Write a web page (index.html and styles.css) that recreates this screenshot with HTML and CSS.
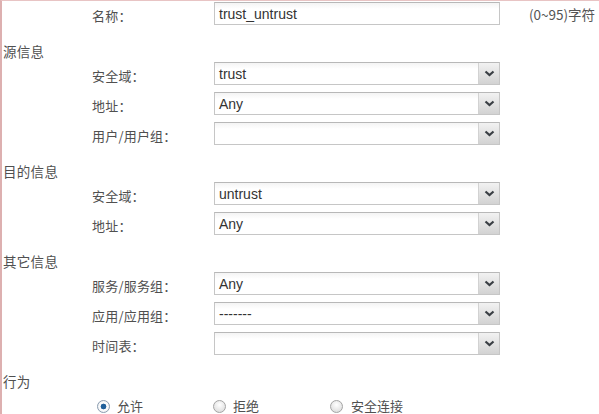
FILE: index.html
```html
<!DOCTYPE html>
<html lang="zh">
<head>
<meta charset="utf-8">
<link rel="stylesheet" href="styles.css">
</head>
<body>
<div class="page">
  <div class="field name-row">
    <span class="label">名称：</span>
    <div class="input">trust_untrust</div>
    <span class="note">(0~95)字符</span>
  </div>

  <div class="section">源信息</div>
  <div class="field">
    <span class="label">安全域：</span>
    <div class="select"><span class="val">trust</span><span class="arrow"><svg width="11" height="7" viewBox="0 0 11 7"><path d="M1.5 1.5 L5.5 5 L9.5 1.5" fill="none" stroke="#3a3f44" stroke-width="2.2"/></svg></span></div>
  </div>
  <div class="field">
    <span class="label">地址：</span>
    <div class="select"><span class="val">Any</span><span class="arrow"><svg width="11" height="7" viewBox="0 0 11 7"><path d="M1.5 1.5 L5.5 5 L9.5 1.5" fill="none" stroke="#3a3f44" stroke-width="2.2"/></svg></span></div>
  </div>
  <div class="field">
    <span class="label">用户/用户组：</span>
    <div class="select"><span class="val"></span><span class="arrow"><svg width="11" height="7" viewBox="0 0 11 7"><path d="M1.5 1.5 L5.5 5 L9.5 1.5" fill="none" stroke="#3a3f44" stroke-width="2.2"/></svg></span></div>
  </div>

  <div class="section">目的信息</div>
  <div class="field">
    <span class="label">安全域：</span>
    <div class="select"><span class="val">untrust</span><span class="arrow"><svg width="11" height="7" viewBox="0 0 11 7"><path d="M1.5 1.5 L5.5 5 L9.5 1.5" fill="none" stroke="#3a3f44" stroke-width="2.2"/></svg></span></div>
  </div>
  <div class="field">
    <span class="label">地址：</span>
    <div class="select"><span class="val">Any</span><span class="arrow"><svg width="11" height="7" viewBox="0 0 11 7"><path d="M1.5 1.5 L5.5 5 L9.5 1.5" fill="none" stroke="#3a3f44" stroke-width="2.2"/></svg></span></div>
  </div>

  <div class="section">其它信息</div>
  <div class="field">
    <span class="label">服务/服务组：</span>
    <div class="select"><span class="val">Any</span><span class="arrow"><svg width="11" height="7" viewBox="0 0 11 7"><path d="M1.5 1.5 L5.5 5 L9.5 1.5" fill="none" stroke="#3a3f44" stroke-width="2.2"/></svg></span></div>
  </div>
  <div class="field">
    <span class="label">应用/应用组：</span>
    <div class="select"><span class="val">-------</span><span class="arrow"><svg width="11" height="7" viewBox="0 0 11 7"><path d="M1.5 1.5 L5.5 5 L9.5 1.5" fill="none" stroke="#3a3f44" stroke-width="2.2"/></svg></span></div>
  </div>
  <div class="field">
    <span class="label">时间表：</span>
    <div class="select"><span class="val"></span><span class="arrow"><svg width="11" height="7" viewBox="0 0 11 7"><path d="M1.5 1.5 L5.5 5 L9.5 1.5" fill="none" stroke="#3a3f44" stroke-width="2.2"/></svg></span></div>
  </div>

  <div class="section">行为</div>
  <div class="radios">
    <label class="radio r1"><span class="dot checked"></span>允许</label>
    <label class="radio r2"><span class="dot"></span>拒绝</label>
    <label class="radio r3"><span class="dot"></span>安全连接</label>
  </div>
</div>
</body>
</html>
```
FILE: styles.css
```css
html, body {
  margin: 0;
  padding: 0;
  background: #ffffff;
}

.page {
  width: 597px;
  height: 413px;
  border-left: 2px solid #ddb0b0;
  border-top: 1px solid #e8c4c4;
  overflow: hidden;
  font-family: "Noto Sans CJK SC", "Noto Sans", sans-serif;
  color: #505050;
  font-size: 13px;
}

.field {
  display: flex;
  align-items: center;
  height: 23px;
  margin-bottom: 7px;
  padding-left: 90px;
}

.name-row {
  margin-top: 1px;
}

.label {
  width: 122px;
  line-height: 18px;
  padding-top: 4px;
  letter-spacing: 0.2px;
}

.input,
.select {
  box-sizing: border-box;
  width: 286px;
  height: 23px;
  border: 1px solid #c6c6c6;
  border-top-color: #b8b8b8;
  background: linear-gradient(#f4f4f4, #ffffff 6px);
  font-family: "Liberation Sans", Arial, sans-serif;
  font-size: 14px;
  color: #333;
  display: flex;
  align-items: center;
}

.input {
  padding-left: 4px;
}

.note {
  margin-left: 29px;
  font-size: 13.5px;
  color: #555;
  white-space: nowrap;
}

.val {
  flex: 1;
  padding-left: 4px;
}

.arrow {
  width: 20px;
  height: 21px;
  border-left: 1px solid #d2d2d2;
  background: linear-gradient(#f2f2f2, #d2d2d2);
  display: flex;
  align-items: center;
  justify-content: center;
}

.section {
  height: 30px;
  box-sizing: border-box;
  padding-top: 10px;
  padding-left: 1px;
  line-height: 18px;
  font-size: 13.5px;
  letter-spacing: 0.3px;
}

.radios {
  display: flex;
  padding-left: 95px;
  padding-top: 5px;
  line-height: 18px;
}

.radio {
  display: flex;
  align-items: center;
}

.r1 { width: 116px; }
.r2 { width: 117px; }

.dot {
  box-sizing: border-box;
  width: 13px;
  height: 13px;
  border-radius: 50%;
  border: 1px solid #a4a4a4;
  background: radial-gradient(circle at 50% 35%, #ffffff, #d6d6d6);
  margin-right: 7px;
}

.r3 .dot { margin-right: 8px; }

.dot.checked {
  border-color: #8a9cb0;
  background: radial-gradient(circle, #1f5f9a 0 2.6px, #ffffff 3.2px, #e2e6ea);
}
```
